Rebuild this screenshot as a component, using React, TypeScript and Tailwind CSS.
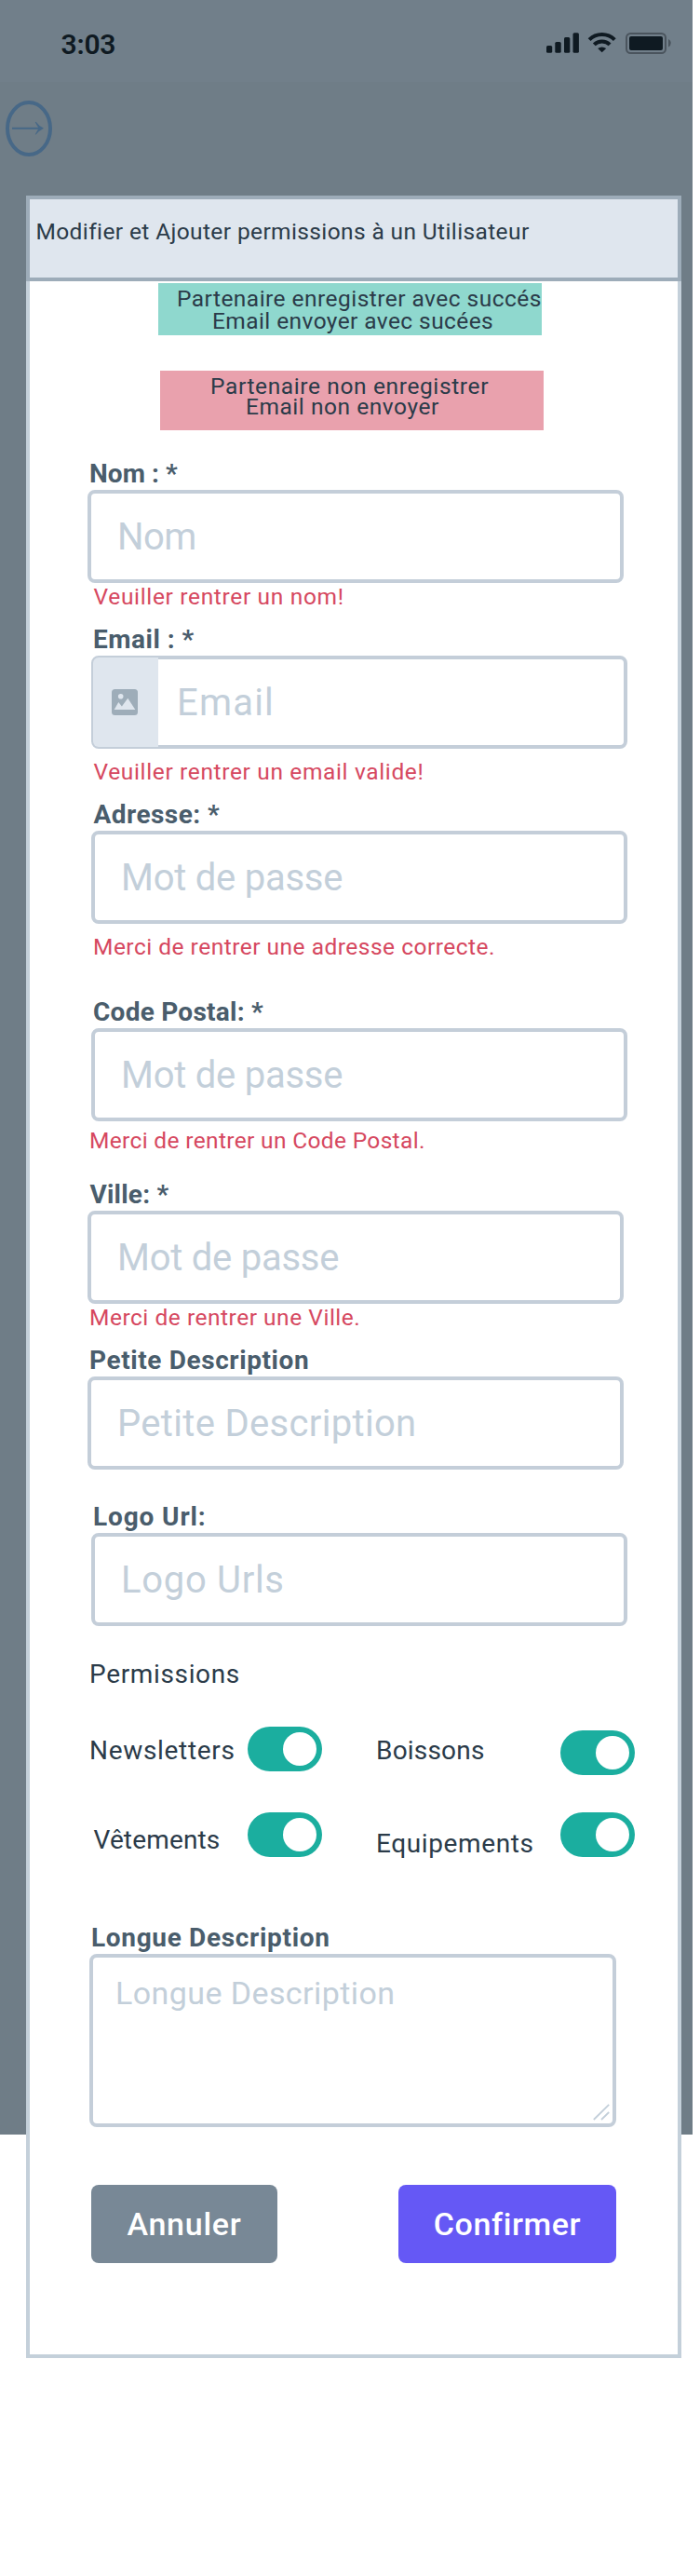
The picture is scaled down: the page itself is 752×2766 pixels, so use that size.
import type { ReactNode } from "react";

function StatusIcons() {
  return (
    <svg width="136" height="24" viewBox="0 0 136 24" className="block">
      <g fill="#0f1a22">
        <rect x="1" y="15" width="6.2" height="7.8" rx="1.6" />
        <rect x="10.3" y="11" width="6.4" height="11.8" rx="1.6" />
        <rect x="20" y="6" width="6.3" height="16.8" rx="1.6" />
        <rect x="29.5" y="1.2" width="6.4" height="21.6" rx="1.6" />
        <path d="M60.7 22.2 L56.2 18 Q60.7 14.8 65.2 18 Z" />
        <rect x="90" y="5" width="36" height="15" rx="2" />
      </g>
      <g fill="none" stroke="#0f1a22" strokeWidth="4">
        <path d="M47.1 8.7 A19.2 19.2 0 0 1 74.3 8.7" />
        <path d="M52.3 13.9 A11.8 11.8 0 0 1 69.1 13.9" />
      </g>
      <rect x="87" y="2" width="42" height="21" rx="4.5" fill="none" stroke="#4a545d" strokeWidth="2" />
      <path d="M132 8 Q134.8 9.5 134.8 12 Q134.8 15 132 16.5 Z" fill="#4a545d" />
    </svg>
  );
}

function ArrowIcon() {
  return (
    <svg width="50" height="60" viewBox="0 0 50 60" className="ml-[6px] mt-5 block">
      <ellipse cx="25" cy="30" rx="23" ry="28" fill="none" stroke="#476887" strokeWidth="4" />
      <path d="M7 29.8 H38" stroke="#476887" strokeWidth="2" />
      <path d="M31.8 23.2 L32.6 22.8 Q35.5 27 41 29.8 Q35.5 32.6 32.6 36.6 L31.8 36.2 Q34 32 35.8 29.8 Q34 27.5 31.8 23.2 Z" fill="#476887" />
    </svg>
  );
}

function ImageIcon() {
  return (
    <svg width="28" height="28" viewBox="0 0 28 28" className="block">
      <rect width="28" height="28" rx="3.5" fill="#9eadb9" />
      <circle cx="9.7" cy="7.7" r="2.8" fill="#dfe6ee" />
      <path d="M2.7 22 L7.3 14 L10.9 18.6 L17.3 9.7 L25.3 22 Z" fill="#dfe6ee" />
    </svg>
  );
}

type FieldProps = {
  label: string;
  labelClass: string;
  placeholder: string;
  placeholderClass: string;
  error?: string;
  errorClass?: string;
  addon?: ReactNode;
  className: string;
};

function Field({ label, labelClass, placeholder, placeholderClass, error, errorClass = "", addon, className }: FieldProps) {
  return (
    <div className={`w-[576px] ${className}`}>
      <div className={`h-[35px] text-[28px] font-bold leading-[35px] whitespace-nowrap text-[#4a5d6c] ${labelClass}`}>{label}</div>
      <div className="flex h-[100px] rounded-lg border-4 border-[#c4ced9]">
        {addon}
        <span className={`mt-[23px] h-[47px] text-[40px] leading-[47px] whitespace-nowrap text-[#c3cfda] ${placeholderClass}`}>{placeholder}</span>
      </div>
      {error && (
        <div className={`h-[29px] text-[24.5px] leading-[29px] whitespace-nowrap text-[#d64860] ${errorClass}`}>{error}</div>
      )}
    </div>
  );
}

function Toggle({ className = "" }: { className?: string }) {
  return (
    <div className={`flex h-12 w-20 shrink-0 items-center justify-end rounded-full bg-[#1bae9f] pr-[6px] ${className}`}>
      <div className="h-9 w-9 rounded-full bg-white" />
    </div>
  );
}

function Permission({ text, textClass, className, toggleClass }: { text: string; textClass: string; className: string; toggleClass?: string }) {
  return (
    <div className={`flex items-start justify-between ${className}`}>
      <span className={`text-[28px] leading-[33px] whitespace-nowrap text-[#2b3b49] ${textClass}`}>{text}</span>
      <Toggle className={toggleClass} />
    </div>
  );
}

export default function App() {
  return (
    <div className="grid h-[2766px] w-[752px] grid-cols-1 grid-rows-1 items-start bg-white font-['Roboto',sans-serif]">
      <div className="col-start-1 row-start-1 h-[2292px] w-[744px] bg-[#6f7d87]">
        <div className="flex h-[88px] items-start justify-between bg-[#717f8a] pr-[22px] pl-[65.5px]">
          <span className="mt-[30px] text-[30px] leading-[35px] font-semibold tracking-[-0.2px] text-[#0f1a22]">3:03</span>
          <div className="mt-[34px]">
            <StatusIcons />
          </div>
        </div>
        <ArrowIcon />
      </div>

      <div className="col-start-1 row-start-1 mt-[210px] ml-7 w-[704px]">
        <div className="h-[92px] border-4 border-[#9dacb9] bg-[#dfe6ee] pt-[20px] pl-[6.5px]">
          <h1 className="text-[24.5px] leading-[29px] tracking-[0.38px] whitespace-nowrap text-[#2b3b49]">
            Modifier et Ajouter permissions à un Utilisateur
          </h1>
        </div>

        <div className="flex h-[2230px] flex-col border-x-4 border-b-4 border-[#c4d0da] bg-white">
          <div className="mt-[2px] ml-[138px] h-14 w-[412px] bg-[#8fd8ce] pt-[5px] text-[24.5px] leading-[23px] whitespace-nowrap text-[#2b3b49]">
            <p className="pl-5 tracking-[0.46px]">Partenaire enregistrer avec succés</p>
            <p className="mt-px pl-[58px] tracking-[0.41px]">Email envoyer avec sucées</p>
          </div>
          <div className="mt-[38px] ml-[140px] h-16 w-[412px] bg-[#e9a1ad] pt-[5px] text-[24.5px] leading-[23px] whitespace-nowrap text-[#2b3b49]">
            <p className="pl-[54px] tracking-[0.62px]">Partenaire non enregistrer</p>
            <p className="-mt-px pl-[92px] tracking-[0.54px]">Email non envoyer</p>
          </div>

          <Field
            className="mt-[29px] ml-[62px]"
            label="Nom : *"
            labelClass="pl-[2px] tracking-[0.05px]"
            placeholder="Nom"
            placeholderClass="pl-[28px] tracking-[-0.5px]"
            error="Veuiller rentrer un nom!"
            errorClass="pl-[6.5px] tracking-[0.66px]"
          />
          <Field
            className="mt-[14px] ml-[66px]"
            label="Email : *"
            labelClass="pl-[2px] tracking-[0.5px]"
            placeholder="Email"
            placeholderClass="pl-[20px] tracking-[1.2px]"
            addon={
              <div className="-m-[2px] mr-0 flex h-24 w-[70px] items-center justify-center rounded-l-md bg-[#dfe6ee] pr-[2px]">
                <ImageIcon />
              </div>
            }
            error="Veuiller rentrer un email valide!"
            errorClass="mt-[10px] pl-[2.5px] tracking-[0.64px]"
          />
          <Field
            className="mt-[14px] ml-[66px]"
            label="Adresse: *"
            labelClass="pl-[2.5px] tracking-[0.45px]"
            placeholder="Mot de passe"
            placeholderClass="pl-[28px] tracking-[-0.25px]"
            error="Merci de rentrer une adresse correcte."
            errorClass="mt-[10px] pl-[2px] tracking-[0.49px]"
          />
          <Field
            className="mt-[38px] ml-[66px]"
            label="Code Postal: *"
            labelClass="pl-[2px] tracking-[0.25px]"
            placeholder="Mot de passe"
            placeholderClass="pl-[28px] tracking-[-0.25px]"
            error="Merci de rentrer un Code Postal."
            errorClass="mt-[6px] -ml-[2px] tracking-[0.34px]"
          />
          <Field
            className="mt-[26px] ml-[62px]"
            label="Ville: *"
            labelClass="pl-[2.5px] tracking-[0.2px]"
            placeholder="Mot de passe"
            placeholderClass="pl-[28px] tracking-[-0.25px]"
            error="Merci de rentrer une Ville."
            errorClass="pl-[2px] tracking-[0.52px]"
          />
          <Field
            className="mt-[14px] ml-[62px]"
            label="Petite Description"
            labelClass="pl-[2px] tracking-[0.6px]"
            placeholder="Petite Description"
            placeholderClass="pl-[28px] tracking-[0.32px]"
          />
          <Field
            className="mt-[33px] ml-[66px]"
            label="Logo Url:"
            labelClass="pl-[2px] tracking-[0.88px]"
            placeholder="Logo Urls"
            placeholderClass="pl-[28px] tracking-[0.7px]"
          />

          <h2 className="mt-[35px] ml-[64px] text-[28px] leading-[33px] tracking-[0.65px] text-[#2b3b49]">Permissions</h2>
          <div className="mt-[40px] flex h-12 items-start">
            <Permission text="Newsletters" textClass="mt-[9px] tracking-[0.69px]" className="ml-16 w-[250px]" />
            <Permission text="Boissons" textClass="mt-[9px] tracking-[0.2px]" className="ml-[58px] w-[278px]" toggleClass="mt-1" />
          </div>
          <div className="mt-[44px] flex h-12 items-start">
            <Permission text="Vêtements" textClass="mt-[13px] tracking-[0.15px]" className="ml-[68.5px] w-[245.5px]" />
            <Permission text="Equipements" textClass="mt-[17px] tracking-[0.61px]" className="ml-[58px] w-[278px]" />
          </div>

          <div className="mt-[69px] ml-16 w-[566px]">
            <div className="h-[35px] pl-[2px] text-[28px] leading-[35px] font-bold tracking-[0.67px] whitespace-nowrap text-[#4a5d6c]">
              Longue Description
            </div>
            <div className="flex h-[186px] justify-between rounded-lg border-4 border-[#c4ced9]">
              <span className="mt-[18px] ml-6 text-[34px] leading-[40px] tracking-[0.42px] text-[#c3cfda]">Longue Description</span>
              <svg width="18" height="18" viewBox="0 0 18 18" className="mr-[3px] mb-[3px] self-end">
                <path d="M0.8 17 L17.2 0.8 M9 17 L17.2 9" stroke="#c3cfda" strokeWidth="1.8" fill="none" />
              </svg>
            </div>
          </div>

          <div className="mt-[62px] ml-[66px] flex w-[564px] justify-between text-[34px] leading-[40px] font-medium text-white">
            <button className="h-[84px] w-[200px] rounded-lg bg-[#788896] tracking-[0.73px]">Annuler</button>
            <button className="h-[84px] w-[234px] rounded-lg bg-[#6558f5] tracking-[0.6px]">Confirmer</button>
          </div>
        </div>
      </div>
    </div>
  );
}
